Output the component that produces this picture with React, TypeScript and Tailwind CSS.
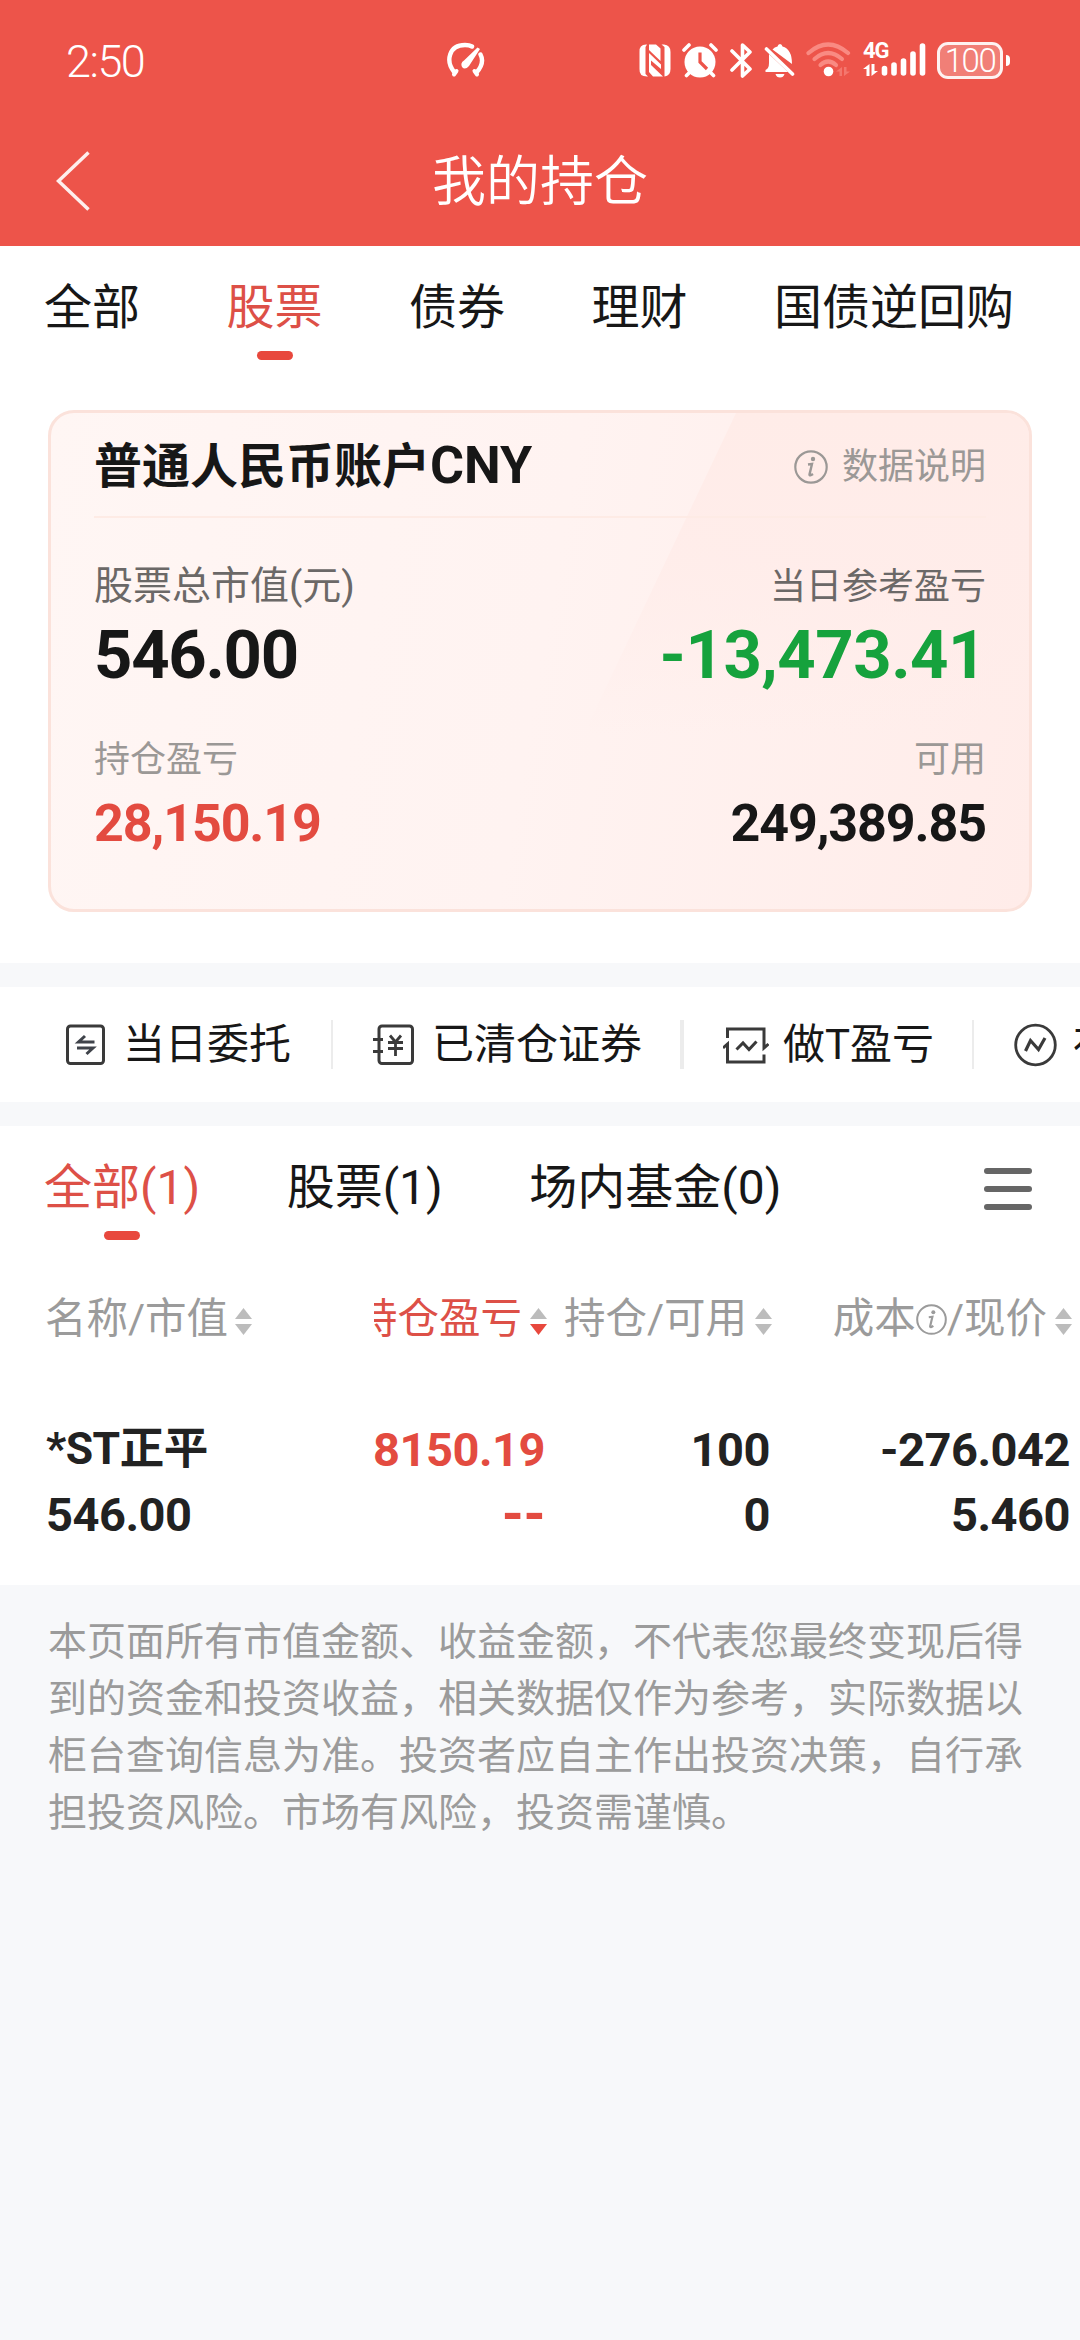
import type { ReactNode } from "react";
import { clsx } from "clsx";

const MARKET_TABS = ["全部", "股票", "债券", "理财", "国债逆回购"];

const HOLDING_TABS = ["全部(1)", "股票(1)", "场内基金(0)"];

const NOTICE =
  "本页面所有市值金额、收益金额，不代表您最终变现后得到的资金和投资收益，相关数据仅作为参考，实际数据以柜台查询信息为准。投资者应自主作出投资决策，自行承担投资风险。市场有风险，投资需谨慎。";

/* ---------- Status bar icons ---------- */

function GaugeIcon() {
  return (
    <svg width="39" height="36" viewBox="0 0 39 36" fill="none" stroke="white" strokeWidth="4.4" strokeLinecap="round">
      <path d="M8.5 30.5C-1 19 3 3 19 3Q23.500 3 26 4.500" />
      <path d="M30.500 30.500Q39 21 34.500 12.500" />
      <path d="M8 32.500L10.500 29M31 32.500L28.500 29" strokeWidth="4" />
      <path d="M31.500 5.500L34 7L23 24Q19 28.500 16 25Q14 21 18 18.500Z" fill="white" stroke="none" />
    </svg>
  );
}

function NfcIcon() {
  return (
    <svg width="32" height="33" viewBox="0 0 32 33" fill="white">
      <path d="M8 .5L6.500 3V30L9 32.500Q0 33 .5 25V8Q0 0 8 .5Z" />
      <path d="M10 .5H17L21.500 4.500V17L10 6Z" />
      <path d="M10 9L22 20.500V25L12 16.500V21L24 32.500H14L10 28Z" />
      <path d="M22.500 .5H25Q31.500 1 31.500 8V25Q31.500 32 25.500 32.500L25.500 3Z" />
    </svg>
  );
}

function AlarmIcon() {
  return (
    <svg width="36" height="35" viewBox="0 0 36 35" fill="none">
      <circle cx="18" cy="19" r="15.500" fill="white" />
      <path d="M2 7L7 2M34 7L29 2M4.500 32.500L8 29M31.500 32.500L28 29" stroke="white" strokeWidth="3.600" strokeLinecap="round" />
      <path d="M18 9.500V19L25 26" stroke="#ed544a" strokeWidth="3.200" />
    </svg>
  );
}

function BluetoothIcon() {
  return (
    <svg width="22" height="35" viewBox="0 0 22 35" fill="none" stroke="white" strokeWidth="3.600" strokeLinecap="round" strokeLinejoin="round">
      <path d="M2 8L20 26L12.500 33V2L20 9L2 27" />
    </svg>
  );
}

function BellOffIcon() {
  return (
    <svg width="31" height="35" viewBox="0 0 31 35" fill="white">
      <path d="M5 11L24 29H1.500V27Q5 25.500 5 20Z" />
      <path d="M8.500 6.500Q10.500 4 13.500 3.500Q14 1 16 1Q18 1 18.500 3.500Q28 6 28 21Z" />
      <path d="M11.500 31H20.500Q19.500 34.500 16 34.500Q12.500 34.500 11.500 31Z" />
      <path d="M2.500 6L28.500 31" stroke="white" strokeWidth="3.600" strokeLinecap="round" />
    </svg>
  );
}

function WifiIcon() {
  return (
    <svg width="45" height="36" viewBox="0 0 45 36" fill="none">
      <g stroke="#f98a82" strokeWidth="4.200" strokeLinecap="round">
        <path d="M2.500 11Q22 -6 42 11" />
        <path d="M8.500 17Q22 5 36 17" />
        <path d="M14.500 23Q22 16 30 23" />
      </g>
      <circle cx="22.500" cy="29.500" r="4.800" fill="white" />
      <path d="M30 29.500L36 25V34H33.500V29.500ZM44 29.500L38 34V25H40.500V29.500Z" fill="#f4776e" />
    </svg>
  );
}

function SignalIcon() {
  return (
    <div className="flex h-[36px] w-[63px] items-end">
      <div className="flex h-full w-[18px] flex-col justify-between">
        <span className="text-[22px] leading-[18px] font-bold tracking-[-1px]">4G</span>
        <svg width="15" height="13" viewBox="0 0 15 13" fill="white" className="mb-px">
          <path d="M0 5L6.500 0V12H3.500V5ZM15 7L8.500 12V0H11.500V7Z" />
        </svg>
      </div>
      <svg width="45" height="36" viewBox="0 0 45 36" fill="none" stroke="white" strokeWidth="5.600" strokeLinecap="round">
        <path d="M3.500 26.500V31M13 23V31M22.500 19V31M32 12V31M41.500 4V31" />
      </svg>
    </div>
  );
}

function Battery() {
  return (
    <div className="flex items-center">
      <div className="flex h-[37px] w-[66px] items-center justify-center rounded-[11px] border-[3px] border-white/90 bg-white/25">
        <span className="text-[33px] leading-none font-light tracking-[-1.5px]">100</span>
      </div>
      <div className="ml-[3px] h-[11px] w-[4px] rounded-r-full bg-white" />
    </div>
  );
}

/* ---------- Shortcut icons ---------- */

function OrdersIcon() {
  return (
    <svg width="39" height="41" viewBox="0 0 39 41" fill="none" stroke="#3a3a3a" strokeWidth="3">
      <rect x="1.500" y="2" width="36" height="37.500" rx="3" />
      <path d="M28.500 18H12.500L19 12M11 24H27L20.500 30" stroke="#3f434a" />
    </svg>
  );
}

function ClearedIcon() {
  return (
    <svg width="41" height="41" viewBox="0 0 41 41" fill="none" stroke="#3a3a3a" strokeWidth="3">
      <rect x="6" y="2" width="33.500" height="37.500" rx="3" />
      <path d="M0 15.500H10M0 27.500H10" />
      <path d="M17 11.500L22.500 18L28 11.500M15 18.500H30M15 24.500H30M22.500 18V32" strokeWidth="2.800" />
    </svg>
  );
}

function TradeIcon() {
  return (
    <svg width="46" height="38" viewBox="0 0 46 38" fill="none" stroke="#3a3a3a" strokeWidth="3">
      <path d="M4.500 12V3H41V22L45.500 18" />
      <path d="M41 28.500V36H4.500V18L0 22" />
      <path d="M13.500 23.500L20 17L26 23.500L33.500 15.500" />
    </svg>
  );
}

function TrendIcon() {
  return (
    <svg width="43" height="44" viewBox="0 0 43 44" fill="none" stroke="#3a3a3a" strokeWidth="2.800">
      <circle cx="21.500" cy="22" r="19.800" />
      <path d="M11.500 28L16.500 17.500L24.500 26.500L31 15" strokeWidth="3.200" />
    </svg>
  );
}

const SHORTCUTS: { label: string; icon: ReactNode; className: string }[] = [
  { label: "当日委托", icon: <OrdersIcon />, className: "w-[331px] gap-[18px] pl-[66px]" },
  { label: "已清仓证券", icon: <ClearedIcon />, className: "w-[349px] gap-[18px] border-l-2 pl-[40px]" },
  { label: "做T盈亏", icon: <TradeIcon />, className: "w-[292px] gap-[14px] border-l-4 pl-[39px]" },
  { label: "存量收益", icon: <TrendIcon />, className: "w-[320px] gap-[16px] border-l-2 pl-[40px]" },
];

function InfoIcon({ size }: { size: number }) {
  return (
    <svg width={size} height={size} viewBox="0 0 34 34" fill="none" stroke="currentColor" className="shrink-0">
      <circle cx="17" cy="17" r="15.700" strokeWidth="2.200" />
      <circle cx="19" cy="9" r="2.200" fill="currentColor" stroke="none" />
      <path d="M14 14.500L18 14L15.500 24.500Q15.500 26.500 19 24" strokeWidth="2.400" />
    </svg>
  );
}

function SortArrows({ active = false }: { active?: boolean }) {
  return (
    <svg width="17" height="27" viewBox="0 0 17 27" className="mt-[4px] shrink-0">
      <path d="M8.500 0L17 11H0Z" fill="#bcbcbc" />
      <path d="M8.500 27L0 16H17Z" fill={active ? "#e8483d" : "#bcbcbc"} />
    </svg>
  );
}

function Underline() {
  return <span className="absolute left-1/2 -ml-[18px] h-[9px] w-[36px] rounded-full bg-[#e8483d]" />;
}

export default function App() {
  return (
    <div className="flex h-[2340px] w-[1080px] flex-col overflow-hidden bg-[#f7f8fa] font-['Roboto','Noto_Sans_CJK_SC',sans-serif] whitespace-nowrap text-[#171717]">
      {/* Header */}
      <header className="h-[246px] shrink-0 bg-[#ed544a] text-white">
        <div className="flex h-[120px] items-center pl-[66px]">
          <span className="w-[380px] pt-[2px] text-[45px] leading-none font-light tracking-[-1.5px]">2:50</span>
          <GaugeIcon />
          <div className="ml-[154px] flex items-center">
            <NfcIcon />
            <div className="ml-[11px]"><AlarmIcon /></div>
            <div className="ml-[12px]"><BluetoothIcon /></div>
            <div className="ml-[12px]"><BellOffIcon /></div>
            <div className="ml-[11px]"><WifiIcon /></div>
            <div className="ml-[12px]"><SignalIcon /></div>
            <div className="ml-[11px]"><Battery /></div>
          </div>
        </div>
        <div className="flex h-[122px] items-center pl-[56px]">
          <svg width="34" height="60" viewBox="0 0 34 60" fill="none" stroke="white" strokeOpacity="0.9" strokeWidth="3.500">
            <path d="M32.500 1.500L2.500 30L32.500 58.500" />
          </svg>
          <h1 className="ml-[342px] pt-[4px] text-[54px] leading-none font-[350]">我的持仓</h1>
        </div>
      </header>

      {/* Account overview */}
      <section className="h-[717px] shrink-0 bg-white">
        <nav className="flex h-[164px] gap-[86.5px] pt-[38px] pl-[44px] text-[48px] leading-[48px]">
          {MARKET_TABS.map((tab, i) => (
            <div key={tab} className={clsx("relative flex flex-col gap-[19px]", i === 1 && "text-[#dd5047]")}>
              {tab}
              {i === 1 && <div><Underline /></div>}
            </div>
          ))}
        </nav>

        <div className="relative mx-[48px] h-[502px] overflow-hidden rounded-[26px] border-[3px] border-[#fbe2db] bg-linear-100 from-[#fff6f4] via-[#fff3f1] to-[#ffece9] px-[43px]">
          <svg className="absolute top-0 right-0" width="440" height="496" viewBox="0 0 440 496">
            <defs>
              <linearGradient id="sheen" x1="0" y1="0" x2="0" y2="1">
                <stop offset="0" stopColor="#ffece8" />
                <stop offset="0.300" stopColor="#ffece9" stopOpacity="0.800" />
                <stop offset="0.650" stopColor="#ffece9" stopOpacity="0" />
              </linearGradient>
            </defs>
            <path d="M147 0H440V496H-88Z" fill="url(#sheen)" />
          </svg>
          <div className="relative flex h-[105px] items-center justify-between border-b-2 border-[#feebe5]">
            <h2 className="pt-[2px] text-[48px] leading-none font-bold">
              普通人民币账户<span className="text-[52px] leading-none">CNY</span>
            </h2>
            <div className="flex items-center gap-[14px] pt-[4px] text-[36px] leading-none text-[#9b9896]">
              <InfoIcon size={34} />
              数据说明
            </div>
          </div>
          <div className="relative flex justify-between pt-[42px]">
            <div>
              <div className="text-[39px] leading-[52px] text-[#6b6867]">股票总市值(元)</div>
              <div className="mt-[9px] text-[67px] leading-[68px] font-bold tracking-[-1.3px]">546.00</div>
            </div>
            <div className="text-right">
              <div className="pt-px text-[36px] leading-[52px] text-[#6b6867]">当日参考盈亏</div>
              <div className="mt-[8px] text-[67px] leading-[68px] font-bold tracking-[-0.5px] text-[#16a23d]">-13,473.41</div>
            </div>
          </div>
          <div className="relative flex justify-between pt-[49px]">
            <div>
              <div className="text-[36px] leading-[44px] text-[#9b9896]">持仓盈亏</div>
              <div className="mt-[16px] text-[52px] leading-[52px] font-bold tracking-[-1.1px] text-[#e34b40]">28,150.19</div>
            </div>
            <div className="text-right">
              <div className="text-[36px] leading-[44px] text-[#9b9896]">可用</div>
              <div className="mt-[16px] text-[52px] leading-[52px] font-bold tracking-[-1.1px]">249,389.85</div>
            </div>
          </div>
        </div>
      </section>

      {/* Shortcuts, scrolls off to the right */}
      <section className="mt-[24px] flex h-[115px] shrink-0 items-center overflow-hidden bg-white text-[42px] leading-none">
        {SHORTCUTS.map((item) => (
          <div key={item.label} className={clsx("flex h-[49px] shrink-0 items-center border-[#ececec]", item.className)}>
            {item.icon}
            <span>{item.label}</span>
          </div>
        ))}
      </section>

      {/* Holdings */}
      <section className="mt-[24px] h-[459px] shrink-0 bg-white">
        <div className="flex h-[150px] justify-between pt-[38px] pr-[48px] pl-[44px]">
          <nav className="flex gap-[86.5px] text-[48px] leading-[48px]">
            {HOLDING_TABS.map((tab, i) => (
              <div key={tab} className={clsx("relative flex flex-col gap-[19px]", i === 0 && "text-[#dd5047]")}>
                {tab}
                {i === 0 && <div><Underline /></div>}
              </div>
            ))}
          </nav>
          <div className="flex h-[46px] w-[48px] flex-col justify-between pt-[4px]">
            <span className="h-[6px] rounded-full bg-[#666]" />
            <span className="h-[6px] rounded-full bg-[#666]" />
            <span className="h-[6px] rounded-full bg-[#666]" />
          </div>
        </div>

        <div className="flex h-[84px] items-center pt-[2px] text-[41.5px] leading-none text-[#9b9b9b]">
          <div className="flex w-[374px] items-center gap-[7px] pl-[45px]">
            名称/市值
            <SortArrows />
          </div>
          <div className="flex w-[173px] items-center justify-end gap-[8px] overflow-hidden text-[#dd5047]">
            持仓盈亏
            <SortArrows active />
          </div>
          <div className="flex w-[225px] items-center justify-end gap-[8px]">
            持仓/可用
            <SortArrows />
          </div>
          <div className="flex w-[300px] items-center justify-end gap-[8px]">
            <span className="flex items-center">
              成本
              <InfoIcon size={31} />
              /现价
            </span>
            <SortArrows />
          </div>
        </div>

        <div className="flex pt-[57px] text-[47px] leading-[65px] font-bold tracking-[-0.5px] text-[#222]">
          <div className="w-[374px] pl-[46px]">
            <div className="text-[44.5px]">*ST正平</div>
            <div>546.00</div>
          </div>
          <div className="flex w-[171px] flex-col items-end overflow-hidden text-[#e34b40]">
            <div>28150.19</div>
            <div className="text-[56px]">--</div>
          </div>
          <div className="w-[225px] text-right">
            <div>100</div>
            <div>0</div>
          </div>
          <div className="w-[300px] text-right">
            <div>-276.042</div>
            <div>5.460</div>
          </div>
        </div>
      </section>

      <p className="px-[48px] pt-[29px] text-[39px] leading-[57px] whitespace-normal text-[#9b9b9b]">{NOTICE}</p>
    </div>
  );
}
